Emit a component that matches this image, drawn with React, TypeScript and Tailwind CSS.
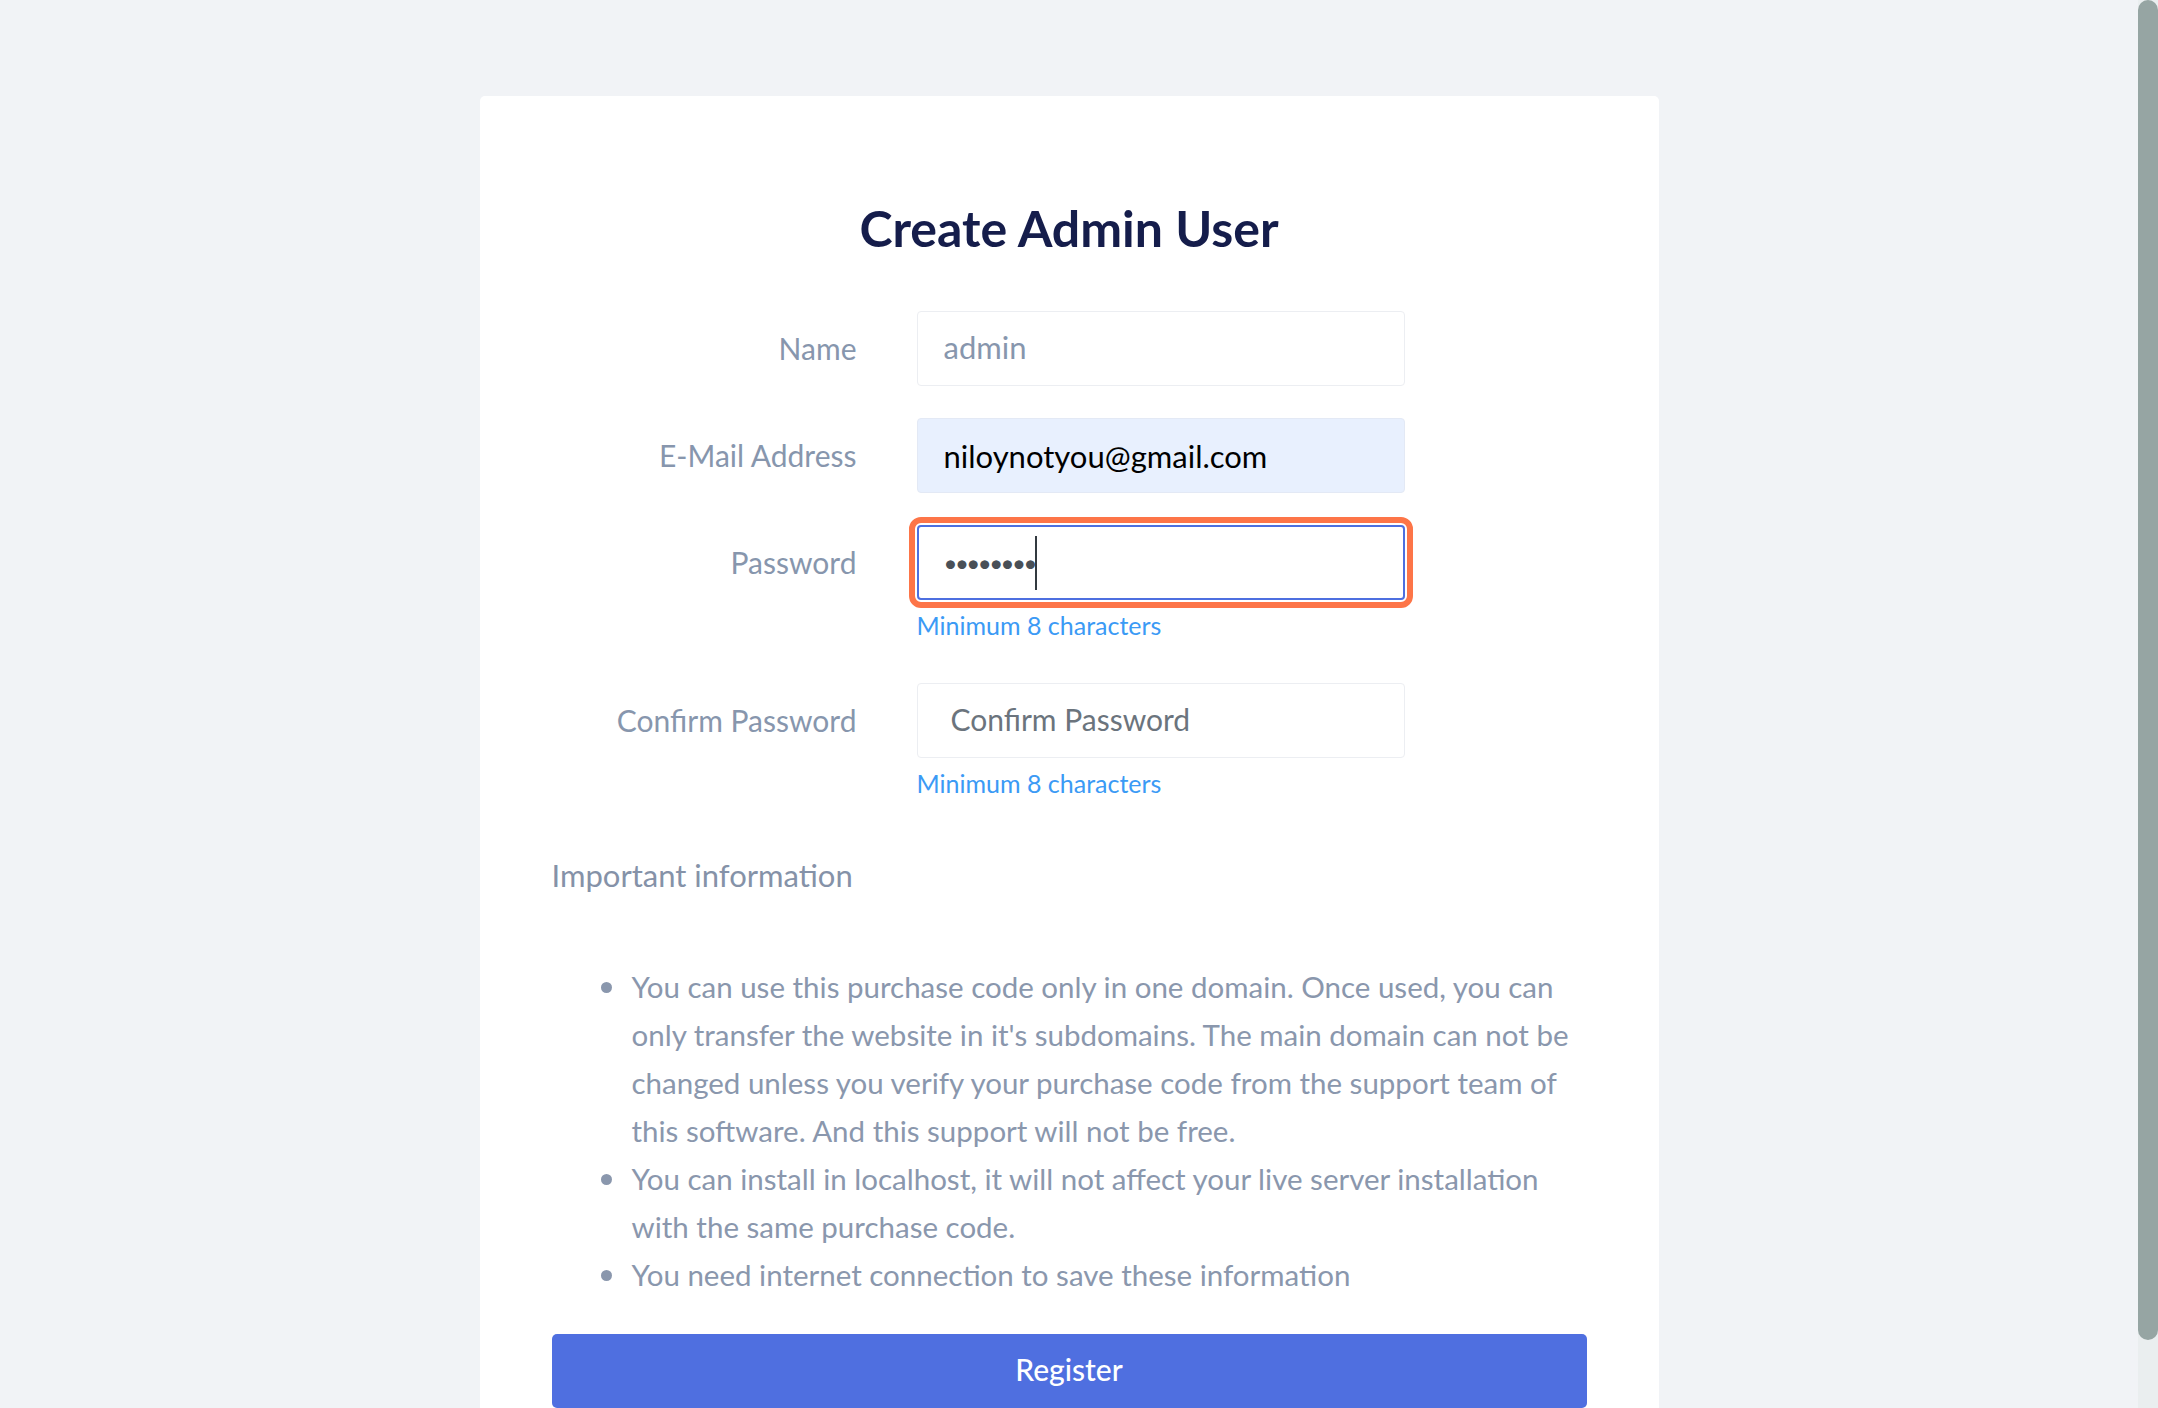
import type { ReactNode } from 'react';

const font = { fontFamily: 'Lato, "Noto Sans", sans-serif' };

type RowProps = {
  label: string;
  helper?: boolean;
  children: ReactNode;
};

function Row({ label, helper, children }: RowProps) {
  return (
    <div className="flex items-start">
      <label className="flex h-[75px] w-[305px] shrink-0 items-center justify-end text-[30px] text-[#8796ad]">
        {label}
      </label>
      <div className="ml-[60px] w-[488px]">
        {children}
        {helper && (
          <p className="mt-[10px] text-[25px] leading-[30px] text-[#3b9af5]">
            Minimum 8 characters
          </p>
        )}
      </div>
    </div>
  );
}

const notes = [
  "You can use this purchase code only in one domain. Once used, you can only transfer the website in it's subdomains. The main domain can not be changed unless you verify your purchase code from the support team of this software. And this support will not be free.",
  'You can install in localhost, it will not affect your live server installation with the same purchase code.',
  'You need internet connection to save these information',
];

export default function App() {
  return (
    <div className="flex h-screen overflow-hidden bg-[#f1f3f6]" style={font}>
      <main className="flex-1 overflow-hidden">
        <div className="mx-auto mt-[96px] w-[1179px] rounded-[5px] bg-white px-[72px] pt-[102px] pb-10">
          <h1 className="text-center text-[50px] leading-[60px] font-bold text-[#151d4b]">
            Create Admin User
          </h1>

          <form className="mt-[53px]" onSubmit={(e) => e.preventDefault()}>
            <Row label="Name">
              <input
                readOnly
                value="admin"
                className="h-[75px] w-full rounded-[4px] border border-[#eceef2] bg-white pb-[3px] pl-[26px] text-[31px] text-[#8796ad] outline-none"
              />
            </Row>

            <div className="mt-[32px]">
              <Row label="E-Mail Address">
                <input
                  readOnly
                  value="niloynotyou@gmail.com"
                  className="h-[75px] w-full rounded-[4px] border border-[#e3e9f5] bg-[#e8f0fe] pl-[26px] text-[31px] text-black outline-none"
                />
              </Row>
            </div>

            <div className="mt-[32px]">
              <Row label="Password" helper>
                <div className="flex h-[75px] w-full items-center rounded-[4px] border-2 border-[#4d6fe0] bg-white pl-[25px] outline-[6px] outline-offset-2 outline-[#fd7548] outline-solid">
                  <span className="text-[24px] leading-none tracking-[-2.5px] text-[#495057]">
                    ••••••••
                  </span>
                  <span className="h-[54px] w-[2px] bg-[#333a40]" />
                </div>
              </Row>
            </div>

            <div className="mt-[43px]">
              <Row label="Confirm Password" helper>
                <input
                  readOnly
                  placeholder="Confirm Password"
                  className="h-[75px] w-full rounded-[4px] border border-[#eceef2] bg-white pb-[3px] pl-[33px] text-[30px] text-[#6b747d] outline-none placeholder:text-[#6b747d]"
                />
              </Row>
            </div>

            <h2 className="mt-[59px] text-[31px] leading-[36px] text-[#8592a8]">
              Important information
            </h2>

            <ul className="mt-[70px] pl-[49px]">
              {notes.map((note) => (
                <li key={note} className="flex items-start text-[29.5px] leading-[48px] text-[#8a97ad]">
                  <span className="mt-[19px] h-[11px] w-[11px] shrink-0 rounded-full bg-[#8a97ad]" />
                  <span className="ml-[20px]">{note}</span>
                </li>
              ))}
            </ul>

            <button
              type="submit"
              className="mt-[35px] h-[74px] w-full rounded-[5px] bg-[#4f6fe0] pb-[3px] text-[30px] font-medium text-white"
            >
              Register
            </button>
          </form>
        </div>
      </main>

      <div className="w-[20px] shrink-0 bg-[#eaeeef]">
        <div className="h-[1340px] rounded-full bg-[#96a5a3]" />
      </div>
    </div>
  );
}
